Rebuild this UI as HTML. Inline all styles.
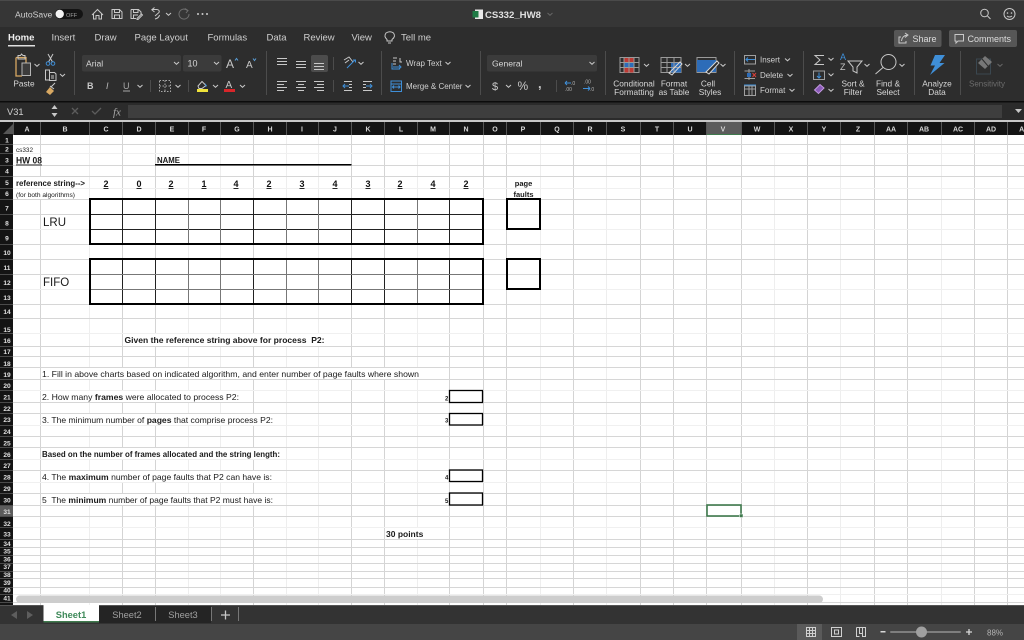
<!DOCTYPE html>
<html><head><meta charset="utf-8"><title>CS332_HW8</title>
<style>
html,body{margin:0;padding:0;width:1024px;height:640px;overflow:hidden;background:#fff}
svg{display:block}
text{font-family:"Liberation Sans",Arial,sans-serif;white-space:pre}
.c{fill:#d0d0d0}
.m{text-anchor:middle}
.r{font-size:8.3px;fill:#d8d8d8;text-anchor:middle}
.tab{font-size:9.5px;fill:#cfcfcf}
.h{font-size:7px;font-weight:bold;fill:#d8d8d8;text-anchor:middle}
.rh{font-size:6.6px;font-weight:bold;fill:#e0e0e0;text-anchor:middle}
.k{fill:#1a1a1a}
.n{font-size:9px;font-weight:bold;fill:#111;text-anchor:middle;text-decoration:underline}
.i{fill:none;stroke:#c8c8c8;stroke-width:1}
.b{fill:none;stroke:#3f8fd8;stroke-width:1}
.chev{fill:none;stroke:#c8c8c8;stroke-width:1}
</style></head><body>
<svg width="1024" height="640" viewBox="0 0 1024 640" xmlns="http://www.w3.org/2000/svg">
<defs><path id="ch" d="M-2.5-1 L0 1.3 L2.5-1"/></defs>
<!-- chrome bg -->
<rect width="1024" height="27" fill="#363636"/>
<rect width="1024" height="1" fill="#4a4a4a"/>
<rect y="27" width="1024" height="74" fill="#2d2d2d"/>
<rect y="101" width="1024" height="1.5" fill="#0c0c0c"/>
<rect y="102.5" width="1024" height="17.5" fill="#2b2b2b"/>
<rect y="120" width="1024" height="2" fill="#c8c8c8"/>

<!-- title bar -->
<text x="15" y="17.5" font-size="8.6" class="c">AutoSave</text>
<rect x="55" y="9" width="28" height="10" rx="5" fill="#141414"/>
<circle cx="59.7" cy="14" r="4.2" fill="#f4f4f4"/>
<text x="66" y="17" font-size="5.6" fill="#a0a0a0">OFF</text>
<path class="i" d="M92 15 L97.5 9.5 L103 15 M93.5 14 V19 H96 V15.5 H99 V19 H101.5 V14"/>
<path class="i" d="M112 9.5 H119.5 L122 12 V18.5 H112 Z M114.5 9.5 V12.5 H119.5 V9.5 M114.5 18.5 V15 H119.5 V18.5"/>
<path class="i" d="M131 9.5 H138.5 L141 12 V14 M131 9.5 V18.5 H136 M133.5 9.5 V12.5 H138 V9.5 M133.5 18 V15 H138 M137 18.5 L141.5 14 L142.5 15 L138 19.5 H137 Z"/>
<path class="i" d="M155 16 L159 12.5 Q160 10 157 9.5 H152 M154.5 7.5 L151.8 9.8 L154.5 12 M155 19 Q159 18 159.5 15"/>
<use href="#ch" x="168.5" y="14" class="chev"/>
<path fill="none" stroke="#6e6e6e" d="M187.5 10.5 A5 5 0 1 0 189 14 M185 8.5 L188 10.5 L186 13"/>
<circle cx="198" cy="14" r="1" fill="#ccc"/><circle cx="202.500" cy="14" r="1" fill="#ccc"/><circle cx="207" cy="14" r="1" fill="#ccc"/>
<rect x="475" y="9.500" width="8" height="9.500" fill="#e8e8e8"/><rect x="472.500" y="11" width="6" height="6.500" fill="#1f7a45"/>
<text x="485" y="18" font-size="9.6" font-weight="bold" fill="#e0e0e0">CS332_HW8</text>
<use href="#ch" x="550" y="14" fill="none" stroke="#666"/>
<circle cx="984.500" cy="13" r="3.800" class="i"/><path class="i" d="M987.500 16 L990.500 19"/>
<circle cx="1009.500" cy="14" r="5.500" class="i"/><circle cx="1007.500" cy="13" r=".8" fill="#ccc"/><circle cx="1011.500" cy="13" r=".8" fill="#ccc"/><path class="i" d="M1007 16 Q1009.500 18 1012 16"/>

<!-- tabs -->
<text x="8" y="40.500" font-size="9.500" font-weight="bold" fill="#f0f0f0">Home</text>
<rect x="8" y="45" width="27" height="1.500" fill="#e0e0e0"/>
<text x="51.500" y="40.500" class="tab">Insert</text>
<text x="94.500" y="40.500" class="tab">Draw</text>
<text x="134.500" y="40.500" class="tab">Page Layout</text>
<text x="207.500" y="40.500" class="tab">Formulas</text>
<text x="266.500" y="40.500" class="tab">Data</text>
<text x="303.500" y="40.500" class="tab">Review</text>
<text x="351.500" y="40.500" class="tab">View</text>
<path class="i" d="M387 41 V39.500 Q383.500 36.500 386 33 Q390 30.500 393.500 33 Q396 36.500 392 39.500 V41 Z M388 43 H391"/>
<text x="401" y="40.500" class="tab">Tell me</text>
<rect x="894" y="30" width="47.500" height="17" rx="2" fill="#565656"/>
<path class="i" d="M901 37 H899 V43 H906 V41 M901.500 41 Q902 36 907 35 M905 33 L908 35 L905 37.500"/>
<text x="912.500" y="42" font-size="9" fill="#dcdcdc">Share</text>
<rect x="949" y="30" width="68" height="17" rx="2" fill="#565656"/>
<path class="i" d="M955 34.500 H963.500 V41 H958 L956 43 V41 H955 Z"/>
<text x="967.500" y="42" font-size="9" fill="#dcdcdc">Comments</text>

<!-- dividers -->
<path stroke="#4c4c4c" fill="none" d="M74.500 51 V95 M266.500 51 V95 M381.500 51 V95 M480.500 51 V95 M605.500 51 V95 M734.500 51 V95 M803.500 51 V95 M914.500 51 V95 M960.500 51 V95 M150.500 80 V92 M188.500 80 V92 M333.500 57 V70 M333.500 80 V92 M556.500 80 V92"/>

<!-- clipboard -->
<path fill="none" stroke="#d8a862" stroke-width="1.300" d="M16 57.500 H26 V72 M16 57.500 V76 H22"/>
<path fill="none" stroke="#c8c8c8" d="M18 57.500 V55.500 H20.500 L21.500 54 L23 55.500 H25 V59 H18 Z"/>
<rect x="22" y="63" width="8.500" height="12.500" fill="#3c3c3c" stroke="#b5b5b5"/>
<use href="#ch" x="37" y="65" class="chev"/>
<text x="24" y="86.500" font-size="8.200" class="r">Paste</text>
<path fill="none" stroke="#c8c8c8" d="M48 54 L52.500 62 M53 54 L48.500 62"/>
<circle cx="48" cy="63.500" r="1.800" class="b"/><circle cx="53" cy="63.500" r="1.800" class="b"/>
<path class="i" d="M45.500 70 H49.500 V80 H45.500 Z M49 72.500 H54.500 L56 74 V80.500 H49 M51 76 H54 M51 78 H54"/>
<use href="#ch" x="62.500" y="75" class="chev"/>
<path fill="#d8a862" d="M46 92 L50 87 L54 91 L50 95 Z"/><path fill="none" stroke="#ccc" d="M51 87 L55 83 M50 86 L54 89"/>

<!-- font -->
<rect x="82" y="55" width="99" height="16.500" rx="2" fill="#3b3b3b"/>
<text x="86" y="66.500" font-size="8.600" fill="#d8d8d8">Arial</text>
<use href="#ch" x="176.500" y="63" class="chev"/>
<rect x="183" y="55" width="38.500" height="16.500" rx="2" fill="#3b3b3b"/>
<text x="187.500" y="66.500" font-size="9" fill="#d8d8d8">10</text>
<use href="#ch" x="216.500" y="63" class="chev"/>
<text x="226" y="68" font-size="12" fill="#c8c8c8">A</text><path fill="none" stroke="#5a9fd8" d="M235 60.500 L236.500 58.500 L238 60.500"/>
<text x="246" y="68" font-size="10" fill="#c8c8c8">A</text><path fill="none" stroke="#5a9fd8" d="M253 58.500 L254.500 60.500 L256 58.500"/>
<text x="87" y="89" font-size="9" font-weight="bold" fill="#c8c8c8">B</text>
<text x="106" y="89" font-size="9" font-style="italic" fill="#b8b8b8">I</text>
<text x="123" y="89" font-size="9" fill="#a8a8a8">U</text><rect x="123" y="90.500" width="7" height="1" fill="#a8a8a8"/>
<use href="#ch" x="140" y="86" class="chev"/>
<rect x="159.500" y="80.500" width="11" height="11" fill="none" stroke="#a8a8a8" stroke-dasharray="1.500 1.500"/><path stroke="#a8a8a8" stroke-dasharray="1.500 1.500" d="M159.500 86 H170.500 M165 80.500 V91.500"/>
<use href="#ch" x="178" y="86" class="chev"/>
<path fill="none" stroke="#c8c8c8" d="M198 86 L202 81.500 L206 85.500 L202 88.500 H199 Z"/><path fill="#3f8fd8" d="M205 83 L207 86 L205.500 87 Z"/>
<rect x="197" y="89" width="11" height="3" fill="#efe23a"/>
<use href="#ch" x="215.500" y="86" class="chev"/>
<text x="225.500" y="88" font-size="10" fill="#c8c8c8">A</text>
<rect x="224" y="89" width="11" height="3" fill="#d8262a"/>
<use href="#ch" x="242.500" y="86" class="chev"/>

<!-- alignment -->
<rect x="311" y="55" width="17" height="17" rx="2" fill="#4c4c4c"/>
<path class="i" d="M277 58.500 H287 M277 61.500 H287 M277 64.500 H287 M296 61.500 H306 M296 64.500 H306 M296 67.500 H306 M314 63.500 H324 M314 66.500 H324 M314 69.500 H324"/>
<path class="i" d="M277 81.500 H287 M277 84.500 H284 M277 87.500 H287 M277 90.500 H284 M296 81.500 H306 M298 84.500 H304 M296 87.500 H306 M298 90.500 H304 M314 81.500 H324 M317 84.500 H324 M314 87.500 H324 M317 90.500 H324"/>
<path class="i" d="M344 60 L349 57 L353 62 M345 63 L349 60"/><path class="b" d="M347 68 L355 60 M353 60 H355.500 V62.500"/>
<use href="#ch" x="361" y="63" class="chev"/>
<path class="i" d="M344 81.500 H352 M344 90.500 H352 M349 84.500 H352 M349 87.500 H352"/><path class="b" d="M349 86 H343 M345 84 L343 86 L345 88"/>
<path class="i" d="M363 81.500 H372 M363 90.500 H372 M363 84.500 H366 M363 87.500 H366"/><path class="b" d="M366 86 H372 M370 84 L372 86 L370 88"/>

<!-- wrap -->
<path class="i" d="M393 58 H397 M393 61 H396 M393 64 H396 M400 58 V62 H402"/><path class="b" d="M393 67 H400 M392 63 V69 H400 M399 65 L401 67 L399 69"/>
<text x="406" y="66" font-size="8" fill="#d0d0d0">Wrap Text</text>
<use href="#ch" x="448" y="63" class="chev"/>
<rect x="391" y="81" width="10.500" height="10.500" fill="none" stroke="#3f8fd8"/><path class="b" d="M391 84 H401.500 M393 87 H400 M394 85.500 L392.500 87 L394 88.500 M398.500 85.500 L400 87 L398.500 88.500"/>
<text x="406" y="89" font-size="8" fill="#d0d0d0">Merge &amp; Center</text>
<use href="#ch" x="468" y="86" class="chev"/>

<!-- number -->
<rect x="487" y="55" width="110" height="16.500" rx="2" fill="#3b3b3b"/>
<text x="492" y="66.500" font-size="8.600" fill="#d8d8d8">General</text>
<use href="#ch" x="592" y="63" class="chev"/>
<text x="492" y="90" font-size="11" fill="#c8c8c8">$</text>
<use href="#ch" x="508.500" y="86" class="chev"/>
<text x="517.500" y="90" font-size="12" fill="#c8c8c8">%</text>
<text x="538" y="88" font-size="13" font-weight="bold" fill="#c8c8c8">,</text>
<path class="b" d="M565 83 H571 M565 83 L567 81 M565 83 L567 85"/><text x="571" y="85" font-size="5" fill="#b5b5b5">.0</text><text x="565" y="91" font-size="5" fill="#b5b5b5">.00</text>
<path class="b" d="M583 88.500 H590 M590 88.500 L588 86.500 M590 88.500 L588 90.500"/><text x="584" y="83.500" font-size="5" fill="#b5b5b5">.00</text><text x="590" y="91" font-size="5" fill="#b5b5b5">.0</text>

<!-- conditional -->
<rect x="620" y="57.500" width="19" height="15" fill="none" stroke="#9a9a9a"/>
<rect x="624" y="58" width="9.500" height="4.500" fill="#bd3a34"/><rect x="624" y="63" width="9.500" height="4.500" fill="#2d6cb8"/><rect x="624" y="68" width="9.500" height="4.500" fill="#bd3a34"/>
<path stroke="#9a9a9a" d="M620 62.500 H639 M620 67.500 H639 M624 57.500 V72.500 M629 57.500 V72.500 M634 57.500 V72.500"/>
<use href="#ch" x="646.500" y="65" class="chev"/>
<text x="634" y="86.500" font-size="8" class="r">Conditional</text><text x="634" y="95" font-size="8" class="r">Formatting</text>
<rect x="661" y="57.500" width="20" height="15" fill="none" stroke="#9a9a9a"/>
<rect x="671" y="62.500" width="10" height="10" fill="#2d6cb8"/>
<path stroke="#9a9a9a" d="M661 62.500 H681 M661 67.500 H681 M667 57.500 V72.500 M674 57.500 V72.500"/>
<path fill="none" stroke="#d8d8d8" d="M669 73 L680 62 L682 64 L672 75 Z"/>
<use href="#ch" x="687.500" y="65" class="chev"/>
<text x="674" y="86.500" font-size="8" class="r">Format</text><text x="674" y="95" font-size="8" class="r">as Table</text>
<rect x="697" y="57.500" width="19" height="15" fill="none" stroke="#9a9a9a"/>
<rect x="697" y="60" width="19" height="12" fill="#2d6cb8"/>
<path fill="#2d2d2d" stroke="#d8d8d8" d="M706 72 L717 61 L719 63 L709 74 Z"/>
<use href="#ch" x="723" y="65" class="chev"/>
<text x="708" y="86.500" font-size="8" class="r">Cell</text><text x="710" y="95" font-size="8" class="r">Styles</text>

<!-- cells group -->
<rect x="744.500" y="55.500" width="11" height="8.500" fill="none" stroke="#a0a0a0"/><path class="b" d="M746 59.500 H755 M748 57.500 L746 59.500 L748 61.500"/>
<text x="760" y="62.500" font-size="8" fill="#d0d0d0">Insert</text><use href="#ch" x="787.500" y="59.500" class="chev"/>
<path stroke="#a0a0a0" fill="none" d="M744.500 71 H755 M744.500 78.500 H755 M749 69 V80"/><rect x="747" y="73" width="4" height="4" fill="#2d6cb8"/><path stroke="#d8403a" d="M752.500 73 L756 77 M756 73 L752.500 77"/>
<text x="760" y="78" font-size="8" fill="#d0d0d0">Delete</text><use href="#ch" x="790" y="75" class="chev"/>
<rect x="744.500" y="86" width="11" height="9.500" fill="none" stroke="#a0a0a0"/><path stroke="#a0a0a0" d="M744.500 89 H755.500 M749 86 V95.500 M752 86 V95.500"/><path stroke="#3f8fd8" d="M744 85 H756"/>
<text x="760" y="93" font-size="8" fill="#d0d0d0">Format</text><use href="#ch" x="792" y="90" class="chev"/>

<!-- editing -->
<path class="i" d="M824 55.500 H815 L820 60 L815 64.500 H824"/><use href="#ch" x="831" y="59" class="chev"/>
<rect x="813.500" y="71" width="11" height="8.500" fill="none" stroke="#a0a0a0"/><path class="b" d="M819 72.500 V78 M817 76 L819 78 L821 76"/><use href="#ch" x="831" y="74.500" class="chev"/>
<path fill="#8a5ab8" stroke="#c49ae0" d="M814.500 90 L820 84.500 L824 88 L818.500 93.500 Z"/><use href="#ch" x="831" y="90" class="chev"/>
<text x="840" y="60" font-size="9" fill="#3f8fd8">A</text><text x="840" y="70" font-size="9" fill="#c8c8c8">Z</text>
<path class="i" d="M848 61 H862 L857 67 V73 L853 71 V67 Z"/><use href="#ch" x="867" y="65" class="chev"/>
<text x="853" y="86.500" font-size="8" class="r">Sort &amp;</text><text x="853" y="95" font-size="8" class="r">Filter</text>
<circle cx="888.500" cy="62" r="7.500" class="i"/><path class="i" d="M883 67.500 L875.500 74"/><use href="#ch" x="902" y="65" class="chev"/>
<text x="888" y="86.500" font-size="8" class="r">Find &amp;</text><text x="888" y="95" font-size="8" class="r">Select</text>

<path fill="#3f8fd8" d="M935 55 H945 L939.500 63 H944.500 L930 75 L935 65.500 H930.500 Z"/>
<text x="937" y="86.500" font-size="8" class="r">Analyze</text><text x="937" y="95" font-size="8" class="r">Data</text>
<rect x="976.500" y="59" width="14" height="15" fill="none" stroke="#3a4750"/><path fill="#777" d="M978 63 L985 56 L992 62 L985 69 Z"/><path stroke="#2d2d2d" d="M982 59 L988 66"/>
<use href="#ch" x="1000" y="65" fill="none" stroke="#666"/>
<text x="987" y="86.500" font-size="8" text-anchor="middle" fill="#6c6c6c">Sensitivity</text>

<!-- formula bar -->
<text x="7" y="115" font-size="9.300" fill="#d0d0d0">V31</text>
<path fill="#c8c8c8" d="M51.500 109 L54.500 105 L57.500 109 Z M51.500 113 L54.500 117 L57.500 113 Z"/>
<path stroke="#5c5c5c" stroke-width="1.300" fill="none" d="M72 108 L78 114 M78 108 L72 114 M92 111 L95 114 L101 108"/>
<text x="113" y="115.500" font-size="11" font-style="italic" fill="#a8a8a8" style="font-family:'Liberation Serif',serif">fx</text>
<rect x="128" y="105" width="874" height="13" fill="#3e3e3e"/>
<path fill="#c8c8c8" d="M1015 109 H1022 L1018.500 113 Z"/>

<!-- column header -->
<rect y="122" width="1024" height="13" fill="#141414"/>
<rect x="706" y="122" width="35" height="13" fill="#5c5c5c"/>
<rect x="706" y="134" width="35" height="1.500" fill="#3f7a4d"/>
<path stroke="#555" fill="none" d="M13.500 122 V135 M40.500 122 V135 M89.500 122 V135 M122.500 122 V135 M155.500 122 V135 M188.500 122 V135 M220.500 122 V135 M253.500 122 V135 M286.500 122 V135 M318.500 122 V135 M351.500 122 V135 M384.500 122 V135 M417.500 122 V135 M449.500 122 V135 M483.500 122 V135 M506.500 122 V135 M540.500 122 V135 M573.500 122 V135 M606.500 122 V135 M640.500 122 V135 M673.500 122 V135 M706.500 122 V135 M741.500 122 V135 M774.500 122 V135 M807.500 122 V135 M840.500 122 V135 M874.500 122 V135 M907.500 122 V135 M941.500 122 V135 M974.500 122 V135 M1007.500 122 V135"/>
<path fill="#555" d="M3 134 L13 124 V134 Z"/>
<text x="27" y="131.500" class="h">A</text><text x="65" y="131.500" class="h">B</text><text x="106" y="131.500" class="h">C</text><text x="139" y="131.500" class="h">D</text><text x="172" y="131.500" class="h">E</text><text x="204" y="131.500" class="h">F</text><text x="237" y="131.500" class="h">G</text><text x="270" y="131.500" class="h">H</text><text x="302" y="131.500" class="h">I</text><text x="335" y="131.500" class="h">J</text><text x="368" y="131.500" class="h">K</text><text x="401" y="131.500" class="h">L</text><text x="433" y="131.500" class="h">M</text><text x="466" y="131.500" class="h">N</text><text x="495" y="131.500" class="h">O</text><text x="523" y="131.500" class="h">P</text><text x="557" y="131.500" class="h">Q</text><text x="590" y="131.500" class="h">R</text><text x="623" y="131.500" class="h">S</text><text x="657" y="131.500" class="h">T</text><text x="690" y="131.500" class="h">U</text><text x="723" y="131.500" class="h">V</text><text x="757" y="131.500" class="h">W</text><text x="791" y="131.500" class="h">X</text><text x="824" y="131.500" class="h">Y</text><text x="858" y="131.500" class="h">Z</text><text x="891" y="131.500" class="h">AA</text><text x="924" y="131.500" class="h">AB</text><text x="958" y="131.500" class="h">AC</text><text x="991" y="131.500" class="h">AD</text><text x="1024" y="131.500" class="h">AE</text>

<!-- sheet grid -->
<rect x="13" y="135" width="1011" height="470" fill="#fff"/>
<g fill="none">
<path stroke="#eeeeee" d="M89.500 135 V605 M188.500 135 V605 M220.500 135 V605 M286.500 135 V605 M318.500 135 V605 M417.500 135 V605 M540.500 135 V605 M606.500 135 V605 M774.500 135 V605 M840.500 135 V605 M941.500 135 V605"/>
<path stroke="#d4d4d4" d="M40.500 135 V605 M122.500 135 V605 M155.500 135 V605 M253.500 135 V605 M351.500 135 V605 M384.500 135 V605 M449.500 135 V605 M483.500 135 V605 M506.500 135 V605 M573.500 135 V605 M640.500 135 V605 M673.500 135 V605 M706.500 135 V605 M741.500 135 V605 M807.500 135 V605 M874.500 135 V605 M907.500 135 V605 M974.500 135 V605 M1007.500 135 V605"/>
</g>
<!-- full-height white-outs where overflowing text hides column gridlines -->
<rect x="14" y="177" width="75" height="11" fill="#fff"/>
<rect x="14" y="189" width="75" height="10" fill="#fff"/>
<rect x="123" y="334" width="228" height="12" fill="#fff"/>
<rect x="41" y="368" width="408" height="11" fill="#fff"/>
<rect x="41" y="391" width="212" height="11" fill="#fff"/>
<rect x="41" y="414" width="245" height="11" fill="#fff"/>
<rect x="41" y="448" width="245" height="11" fill="#fff"/>
<rect x="41" y="471" width="245" height="11" fill="#fff"/>
<rect x="41" y="494" width="245" height="11" fill="#fff"/>
<rect x="385" y="528" width="64" height="11" fill="#fff"/>
<g fill="none">
<path stroke="#f0f0f0" d="M13 153.500 H1024 M13 188.500 H1024 M13 229.500 H1024 M13 289.500 H1024 M13 333.500 H1024 M13 390.500 H1024 M13 425.500 H1024 M13 459.500 H1024 M13 482.500 H1024 M13 527.500 H1024 M13 594.500 H1024"/>
<path stroke="#d6d6d6" d="M13 144.500 H1024 M13 165.500 H1024 M13 176.500 H1024 M13 199.500 H1024 M13 214.500 H1024 M13 244.500 H1024 M13 259.500 H1024 M13 274.500 H1024 M13 304.500 H1024 M13 318.500 H1024 M13 346.500 H1024 M13 356.500 H1024 M13 367.500 H1024 M13 379.500 H1024 M13 402.500 H1024 M13 413.500 H1024 M13 436.500 H1024 M13 447.500 H1024 M13 470.500 H1024 M13 493.500 H1024 M13 505.500 H1024 M13 516.500 H1024 M13 539.500 H1024 M13 547.500 H1024 M13 555.500 H1024 M13 563.500 H1024 M13 571.500 H1024 M13 578.500 H1024 M13 587.500 H1024 M13 602.500 H1024"/>
</g>

<!-- row header -->
<rect y="135" width="13" height="470" fill="#141414"/>
<rect y="505.500" width="13" height="11" fill="#5c5c5c"/>
<path stroke="#4a4a4a" fill="none" d="M0 144.500 H13 M0 153.500 H13 M0 165.500 H13 M0 176.500 H13 M0 188.500 H13 M0 199.500 H13 M0 214.500 H13 M0 229.500 H13 M0 244.500 H13 M0 259.500 H13 M0 274.500 H13 M0 289.500 H13 M0 304.500 H13 M0 318.500 H13 M0 333.500 H13 M0 346.500 H13 M0 356.500 H13 M0 367.500 H13 M0 379.500 H13 M0 390.500 H13 M0 402.500 H13 M0 413.500 H13 M0 425.500 H13 M0 436.500 H13 M0 447.500 H13 M0 459.500 H13 M0 470.500 H13 M0 482.500 H13 M0 493.500 H13 M0 505.500 H13 M0 516.500 H13 M0 527.500 H13 M0 539.500 H13 M0 547.500 H13 M0 555.500 H13 M0 563.500 H13 M0 571.500 H13 M0 578.500 H13 M0 587.500 H13 M0 594.500 H13 M0 602.500 H13"/>
<text x="7" y="142.500" class="rh">1</text><text x="7" y="151.500" class="rh">2</text><text x="7" y="162.500" class="rh">3</text><text x="7" y="173.500" class="rh">4</text><text x="7" y="185" class="rh">5</text><text x="7" y="196" class="rh">6</text><text x="7" y="210.500" class="rh">7</text><text x="7" y="225.500" class="rh">8</text><text x="7" y="240.500" class="rh">9</text><text x="7" y="255" class="rh">10</text><text x="7" y="270" class="rh">11</text><text x="7" y="285" class="rh">12</text><text x="7" y="300" class="rh">13</text><text x="7" y="314" class="rh">14</text><text x="7" y="332" class="rh">15</text><text x="7" y="343" class="rh">16</text><text x="7" y="354" class="rh">17</text><text x="7" y="366" class="rh">18</text><text x="7" y="377" class="rh">19</text><text x="7" y="388" class="rh">20</text><text x="7" y="399.500" class="rh">21</text><text x="7" y="411" class="rh">22</text><text x="7" y="422" class="rh">23</text><text x="7" y="434" class="rh">24</text><text x="7" y="445.500" class="rh">25</text><text x="7" y="457" class="rh">26</text><text x="7" y="468" class="rh">27</text><text x="7" y="479.500" class="rh">28</text><text x="7" y="491" class="rh">29</text><text x="7" y="502.500" class="rh">30</text><text x="7" y="514" class="rh">31</text><text x="7" y="526" class="rh">32</text><text x="7" y="536.500" class="rh">33</text><text x="7" y="546" class="rh">34</text><text x="7" y="553.500" class="rh">35</text><text x="7" y="561.500" class="rh">36</text><text x="7" y="569" class="rh">37</text><text x="7" y="577" class="rh">38</text><text x="7" y="585" class="rh">39</text><text x="7" y="592.500" class="rh">40</text><text x="7" y="600.500" class="rh">41</text>

<!-- tables -->
<g fill="none" stroke="#000">
<path stroke="#222" d="M122.500 199 V244 M155.500 199 V244 M253.500 199 V244 M351.500 199 V244 M384.500 199 V244 M449.500 199 V244 M90 214.500 H483 M90 229.500 H483"/>
<path stroke="#777" d="M188.500 199 V244 M220.500 199 V244 M286.500 199 V244 M318.500 199 V244 M417.500 199 V244"/>
<path stroke="#222" d="M122.500 259 V304 M155.500 259 V304 M253.500 259 V304 M351.500 259 V304 M384.500 259 V304 M449.500 259 V304"/>
<path stroke="#777" d="M188.500 259 V304 M220.500 259 V304 M286.500 259 V304 M318.500 259 V304 M417.500 259 V304 M90 274.500 H483 M90 289.500 H483"/>
<rect x="90" y="199" width="393" height="45" stroke-width="2"/>
<rect x="90" y="259" width="393" height="45" stroke-width="2"/>
<rect x="507" y="199" width="33" height="30" stroke-width="2"/>
<rect x="507" y="259" width="33" height="30" stroke-width="2"/>
<rect x="449.500" y="390.500" width="33" height="12" stroke-width="1.300"/>
<rect x="449.500" y="413.500" width="33" height="11.500" stroke-width="1.300"/>
<rect x="449.500" y="470" width="33" height="11.500" stroke-width="1.300"/>
<rect x="449.500" y="493" width="33" height="12" stroke-width="1.300"/>
</g>
<rect x="155" y="164" width="196.500" height="1.500" fill="#000"/>

<!-- cell text -->
<text x="16" y="152" font-size="6.500" class="k" textLength="17" lengthAdjust="spacingAndGlyphs">cs332</text>
<text x="16" y="163.500" font-size="9" font-weight="bold" class="k" text-decoration="underline" textLength="26" lengthAdjust="spacingAndGlyphs">HW 08</text>
<text x="157" y="163" font-size="8" font-weight="bold" class="k" textLength="23" lengthAdjust="spacingAndGlyphs">NAME</text>
<text x="16" y="186" font-size="8" font-weight="bold" class="k" textLength="69" lengthAdjust="spacingAndGlyphs">reference string--&gt;</text>
<text x="106" y="187" class="n">2</text><text x="139" y="187" class="n">0</text><text x="171" y="187" class="n">2</text><text x="204" y="187" class="n">1</text><text x="236" y="187" class="n">4</text><text x="269" y="187" class="n">2</text><text x="302" y="187" class="n">3</text><text x="335" y="187" class="n">4</text><text x="368" y="187" class="n">3</text><text x="400" y="187" class="n">2</text><text x="433" y="187" class="n">4</text><text x="466" y="187" class="n">2</text>
<text x="16" y="197" font-size="6.500" class="k" textLength="59" lengthAdjust="spacingAndGlyphs">(for both algorithms)</text>
<text x="523.500" y="186" font-size="7.500" font-weight="bold" class="k m">page</text>
<text x="523.500" y="197" font-size="7.500" font-weight="bold" class="k m">faults</text>
<text x="43" y="226" font-size="11.500" class="k">LRU</text>
<text x="43" y="286" font-size="11.500" class="k">FIFO</text>
<text x="124.500" y="343" font-size="8.500" font-weight="bold" class="k" textLength="200" lengthAdjust="spacingAndGlyphs">Given the reference string above for process  P2:</text>
<text x="42" y="377" font-size="8.500" class="k" textLength="377" lengthAdjust="spacingAndGlyphs">1. Fill in above charts based on indicated algorithm, and enter number of page faults where shown</text>
<text x="42" y="400" font-size="8.500" class="k" textLength="197" lengthAdjust="spacingAndGlyphs">2. How many <tspan font-weight="bold">frames</tspan> were allocated to process P2:</text>
<text x="42" y="423" font-size="8.500" class="k" textLength="231" lengthAdjust="spacingAndGlyphs">3. The minimum number of <tspan font-weight="bold">pages</tspan> that comprise process P2:</text>
<text x="42" y="457" font-size="8" font-weight="bold" class="k" textLength="238" lengthAdjust="spacingAndGlyphs">Based on the number of frames allocated and the string length:</text>
<text x="42" y="480" font-size="8.500" class="k" textLength="230" lengthAdjust="spacingAndGlyphs">4. The <tspan font-weight="bold">maximum</tspan> number of page faults that P2 can have is:</text>
<text x="42" y="503" font-size="8.500" class="k" textLength="231" lengthAdjust="spacingAndGlyphs">5  The <tspan font-weight="bold">minimum</tspan> number of page faults that P2 must have is:</text>
<text x="445" y="400.500" font-size="6" font-weight="bold" class="k">2</text>
<text x="445" y="422.500" font-size="6" font-weight="bold" class="k">3</text>
<text x="445" y="479.500" font-size="6" font-weight="bold" class="k">4</text>
<text x="445" y="503" font-size="6" font-weight="bold" class="k">5</text>
<text x="386" y="537" font-size="8.500" font-weight="bold" class="k">30 points</text>

<!-- selection -->
<rect x="707" y="505" width="34" height="11" fill="none" stroke="#3f7a4d" stroke-width="1.600"/>
<rect x="739.500" y="514" width="3.500" height="3.500" fill="#3f7a4d" stroke="#fff" stroke-width=".5"/>

<!-- scrollbar -->
<rect x="16" y="595.500" width="807" height="7.500" rx="3.700" fill="#cdcdcd"/>

<!-- bottom -->
<rect y="605" width="1024" height="19" fill="#333333"/>
<rect y="605" width="1024" height="1" fill="#555"/>
<rect y="624" width="1024" height="16" fill="#454545"/>
<path fill="#5e5e5e" d="M17 611 V619 L11 615 Z M27 611 V619 L33 615 Z"/>
<rect x="99" y="606" width="112" height="17" fill="#242424"/>
<rect x="43.500" y="605" width="55.500" height="16.500" fill="#fff"/>
<rect x="43.500" y="621" width="55.500" height="1.500" fill="#3f7a4d"/>
<text x="71" y="618" font-size="9.300" font-weight="bold" text-anchor="middle" fill="#3f8a5a">Sheet1</text>
<text x="127" y="618" font-size="9.300" text-anchor="middle" fill="#a0a0a0">Sheet2</text>
<text x="183" y="618" font-size="9.300" text-anchor="middle" fill="#a0a0a0">Sheet3</text>
<path stroke="#777" d="M155.500 607 V621 M211.500 607 V621 M238.500 607 V621"/>
<path stroke="#c8c8c8" stroke-width="1.300" d="M221 615 H230 M225.500 610.500 V619.500"/>

<!-- status -->
<rect x="797" y="624" width="25" height="16" fill="#5a5a5a"/>
<path fill="none" stroke="#d0d0d0" d="M806.500 627.500 H815.500 V636.500 H806.500 Z M806.500 630.500 H815.500 M806.500 633.500 H815.500 M809.500 627.500 V636.500 M812.500 627.500 V636.500"/>
<path fill="none" stroke="#d0d0d0" d="M831.500 627.500 H841.500 V636.500 H831.500 Z M834.500 630 H838.500 V634 H834.500 Z"/>
<path fill="none" stroke="#d0d0d0" d="M856.500 627.500 H865.500 V636.500 H862.500 V633.500 H859.500 V627.500 M856.500 627.500 V636.500 H859.500 M862.500 627.500 V633.500"/>
<rect x="880.500" y="631" width="5" height="1.500" fill="#d8d8d8"/>
<rect x="890" y="631" width="71" height="2" rx="1" fill="#7e7e7e"/>
<circle cx="921.500" cy="632" r="5.500" fill="#a0a0a0"/>
<path stroke="#d8d8d8" stroke-width="1.300" d="M966 632 H972 M969 629 V635"/>
<text x="987" y="635.500" font-size="8" fill="#b5b5b5">88%</text>
</svg>
</body></html>
